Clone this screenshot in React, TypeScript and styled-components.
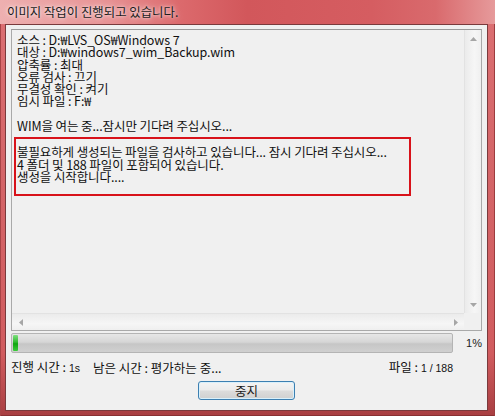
import React from 'react';
import styled, { createGlobalStyle } from 'styled-components';

const GlobalStyle = createGlobalStyle`
	html, body {
		margin: 0;
		padding: 0;
		background: #ffffff;
	}
	body {
		font-family: 'Noto Sans CJK KR', 'Liberation Sans', sans-serif;
		font-size: 12px;
		color: #111;
	}
`;

const logLines = [
	'소스 : D:₩LVS_OS₩Windows 7',
	'대상 : D:₩windows7_wim_Backup.wim',
	'압축률 : 최대',
	'오류 검사 : 끄기',
	'무결성 확인 : 켜기',
	'임시 파일 : F:₩',
];

const scanLines = [
	'불필요하게 생성되는 파일을 검사하고 있습니다... 잠시 기다려 주십시오...',
	'4 폴더 및 188 파일이 포함되어 있습니다.',
	'생성을 시작합니다....',
];

function Triangle({ dir }: { dir: 'up' | 'down' | 'left' | 'right' }) {
	const points = {
		up: '0,4 3.5,0 7,4',
		down: '0,0 3.5,4 7,0',
		left: '4,0 0,3.5 4,7',
		right: '0,0 4,3.5 0,7',
	}[dir];
	const horizontal = dir === 'left' || dir === 'right';
	return (
		<svg width={horizontal ? 4 : 7} height={horizontal ? 7 : 4}>
			<polygon points={points} fill="#a6a6a6" />
		</svg>
	);
}

function App() {
	const progress = 1;
	return (
		<>
			<GlobalStyle />
			<Window>
				<TitleBar>
					<Title>이미지 작업이 진행되고 있습니다.</Title>
				</TitleBar>
				<Client>
					<LogBox>
						<LogContent>
							{logLines.map((line) => (
								<Line key={line}>{line}</Line>
							))}
							<Line />
							<Line>WIM을 여는 중...잠시만 기다려 주십시오...</Line>
							<Highlight>
								{scanLines.map((line) => (
									<Line key={line}>{line}</Line>
								))}
							</Highlight>
						</LogContent>
						<VScroll>
							<ArrowBox>
								<Triangle dir="up" />
							</ArrowBox>
							<ArrowBox>
								<Triangle dir="down" />
							</ArrowBox>
						</VScroll>
						<HScroll>
							<ArrowBox>
								<Triangle dir="left" />
							</ArrowBox>
							<ArrowBox>
								<Triangle dir="right" />
							</ArrowBox>
						</HScroll>
						<Corner />
					</LogBox>
					<ProgressRow>
						<ProgressTrack>
							<ProgressFill style={{ width: `${Math.max(progress * 1.2, 1)}%` }} />
						</ProgressTrack>
						<Percent>{progress}%</Percent>
					</ProgressRow>
					<StatusRow>
						<StatusItem>
							진행 시간 : <Small>1s</Small>
						</StatusItem>
						<StatusItem>남은 시간 : 평가하는 중...</StatusItem>
						<Spacer />
						<StatusItem>
							파일 : <Small>1 / 188</Small>
						</StatusItem>
					</StatusRow>
					<ButtonRow>
						<StopButton>중지</StopButton>
					</ButtonRow>
				</Client>
			</Window>
		</>
	);
}

const Window = styled.div`
	width: 495px;
	height: 416px;
	box-sizing: border-box;
	display: flex;
	flex-direction: column;
	padding: 0 7px 5px 5px;
	background: linear-gradient(to bottom, #dc7073 0%, #d4616464 40%, #d15c5f 85%, #a83e41 100%), #d4686b;
	box-shadow: inset 1px 0 0 #a84446, inset -1px 0 0 #9c3c3e, inset 0 -1px 0 #8a3032;
`;

const TitleBar = styled.div`
	height: 24px;
	display: flex;
	align-items: center;
	margin: 0 -7px 0 -5px;
	padding-left: 7px;
	background: linear-gradient(
		to right,
		#eeb0b0 0%,
		#e79294 22%,
		#dc6a6d 36%,
		#d2575b 50%,
		#d55d61 75%,
		#d96a6d 88%,
		#e69a9b 100%
	);
`;

const Title = styled.span`
	font-size: 12.4px;
	color: #1c1c1c;
	text-shadow: 0 0 6px rgba(255, 255, 255, 0.9), 0 0 3px rgba(255, 255, 255, 0.7);
`;

const Client = styled.div`
	flex: 1;
	display: flex;
	flex-direction: column;
	background: #f0f0f0;
	border: 1px solid #7a3a3c;
	padding: 4px 5px 10px 5px;
	min-height: 0;
`;

const LogBox = styled.div`
	flex: 1;
	min-height: 0;
	display: grid;
	grid-template-columns: 1fr 17px;
	grid-template-rows: 1fr 17px;
	border: 1px solid #a9a9a9;
	border-top-color: #9a9a9a;
	background: #f0f0f0;
`;

const LogContent = styled.div`
	padding: 4px 0 0 5px;
	overflow: hidden;
`;

const Line = styled.div`
	height: 12.3px;
	line-height: 12.3px;
	white-space: nowrap;
	font-size: 12.5px;
	letter-spacing: -0.1px;
`;

const Highlight = styled.div`
	width: 397px;
	box-sizing: border-box;
	margin: 5px 0 0 -3px;
	padding: 7px 0 11px 1px;
	border: 2px solid #d8121a;
`;

const VScroll = styled.div`
	display: flex;
	flex-direction: column;
	justify-content: space-between;
	align-items: center;
	border-left: 1px solid #e2e2e2;
	background: linear-gradient(to right, #ebebeb, #f6f6f6 60%, #efefef);
`;

const HScroll = styled.div`
	display: flex;
	justify-content: space-between;
	align-items: center;
	border-top: 1px solid #e2e2e2;
	background: linear-gradient(to bottom, #ebebeb, #f6f6f6 60%, #efefef);
`;

const ArrowBox = styled.div`
	width: 17px;
	height: 17px;
	display: flex;
	align-items: center;
	justify-content: center;
`;

const Corner = styled.div`
	background: #f0f0f0;
`;

const ProgressRow = styled.div`
	display: flex;
	align-items: center;
	margin-top: 2px;
	height: 20px;
`;

const ProgressTrack = styled.div`
	width: 442px;
	height: 20px;
	box-sizing: border-box;
	border: 1px solid #b4b4b4;
	border-radius: 2px;
	padding: 1px;
	background: linear-gradient(to bottom, #e6e6e6 0%, #d6d6d6 45%, #c6c6c6 55%, #d0d0d0 100%);
	display: flex;
`;

const ProgressFill = styled.div`
	min-width: 5px;
	height: 100%;
	border-radius: 1px;
	background: linear-gradient(to bottom, #7fe07f 0%, #2fb82f 45%, #0ea50e 55%, #3ccc3c 100%);
`;

const Percent = styled.span`
	flex: 1;
	text-align: right;
	font-family: 'Liberation Sans', sans-serif;
	font-size: 11px;
	color: #222;
`;

const StatusRow = styled.div`
	display: flex;
	align-items: center;
	gap: 13px;
	height: 13px;
	margin-top: 8px;
	padding-right: 29px;
	font-size: 12.5px;
	white-space: nowrap;
`;

const StatusItem = styled.span`
	line-height: 13px;
`;

const Small = styled.span`
	font-family: 'Liberation Sans', sans-serif;
	font-size: 10.5px;
`;

const Spacer = styled.span`
	flex: 1;
`;

const ButtonRow = styled.div`
	display: flex;
	justify-content: center;
	margin-top: 7px;
`;

const StopButton = styled.button`
	width: 97px;
	height: 19px;
	padding: 0;
	font-family: 'Noto Sans CJK KR', sans-serif;
	font-size: 12.5px;
	line-height: 17px;
	color: #1a1a1a;
	border: 1px solid #3c7fb1;
	border-radius: 3px;
	background: linear-gradient(to bottom, #f4f4f4 0%, #ebebeb 48%, #dcdcdc 52%, #d0d0d0 100%);
	box-shadow: inset 0 0 0 1px #d9f0fb;
`;

export default App;
